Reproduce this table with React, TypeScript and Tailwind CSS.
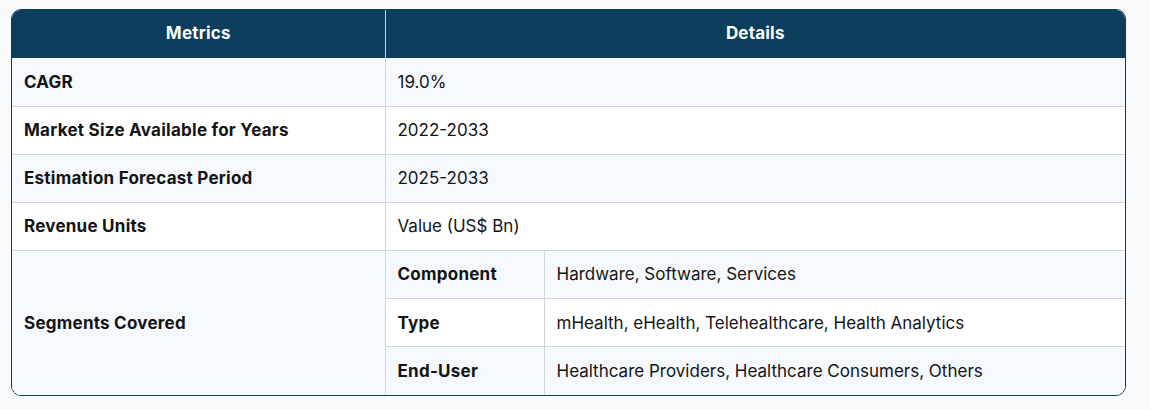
import React from "react";

const rows: [string, string][] = [
  ["CAGR", "19.0%"],
  ["Market Size Available for Years", "2022-2033"],
  ["Estimation Forecast Period", "2025-2033"],
  ["Revenue Units", "Value (US$ Bn)"],
];

const segs: [string, string][] = [
  ["Component", "Hardware, Software, Services"],
  ["Type", "mHealth, eHealth, Telehealthcare, Health Analytics"],
  ["End-User", "Healthcare Providers, Healthcare Consumers, Others"],
];

export default function App() {
  return (
    <div
      className="min-h-[409px] w-full bg-[#f8fafc] pt-[9px] pl-[11px]"
      style={{ fontFamily: "Inter, Lato, 'Noto Sans', sans-serif" }}
    >
      <div className="w-[1115px] overflow-hidden rounded-[10px] border border-[#0b3d5c] bg-white">
        <table className="w-full border-collapse text-[17px] text-[#141414]">
          <colgroup>
            <col className="w-[373px]" />
            <col className="w-[159px]" />
            <col />
          </colgroup>
          <thead>
            <tr className="h-[48px] bg-[#0b3d5c] text-white">
              <th className="border-r border-[#d1d5db] text-center font-bold tracking-[0.2px]">Metrics</th>
              <th colSpan={2} className="text-center font-bold tracking-[0.2px]">Details</th>
            </tr>
          </thead>
          <tbody>
            {rows.map(([k, v], i) => (
              <tr
                key={k}
                className={`h-[48.15px] border-b border-[#d1d5db] ${i % 2 === 0 ? "bg-[#f5f9fe]" : "bg-white"}`}
              >
                <td className="border-r border-[#d1d5db] px-3 pt-px font-bold tracking-[0.25px]">{k}</td>
                <td colSpan={2} className="px-3 pt-px">{v}</td>
              </tr>
            ))}
            {segs.map(([k, v], i) => (
              <tr
                key={k}
                className={`h-[48.15px] ${i < 2 ? "border-b border-[#d1d5db]" : ""} ${i % 2 === 0 ? "bg-[#f5f9fe]" : "bg-white"}`}
              >
                {i === 0 && (
                  <td rowSpan={3} className="border-r border-[#d1d5db] bg-[#f5f9fe] px-3 pt-px font-bold tracking-[0.25px]">
                    Segments Covered
                  </td>
                )}
                <td className="border-r border-[#d1d5db] px-3 pt-px font-bold tracking-[0.25px]">{k}</td>
                <td className="px-3 pt-px">{v}</td>
              </tr>
            ))}
          </tbody>
        </table>
      </div>
    </div>
  );
}
